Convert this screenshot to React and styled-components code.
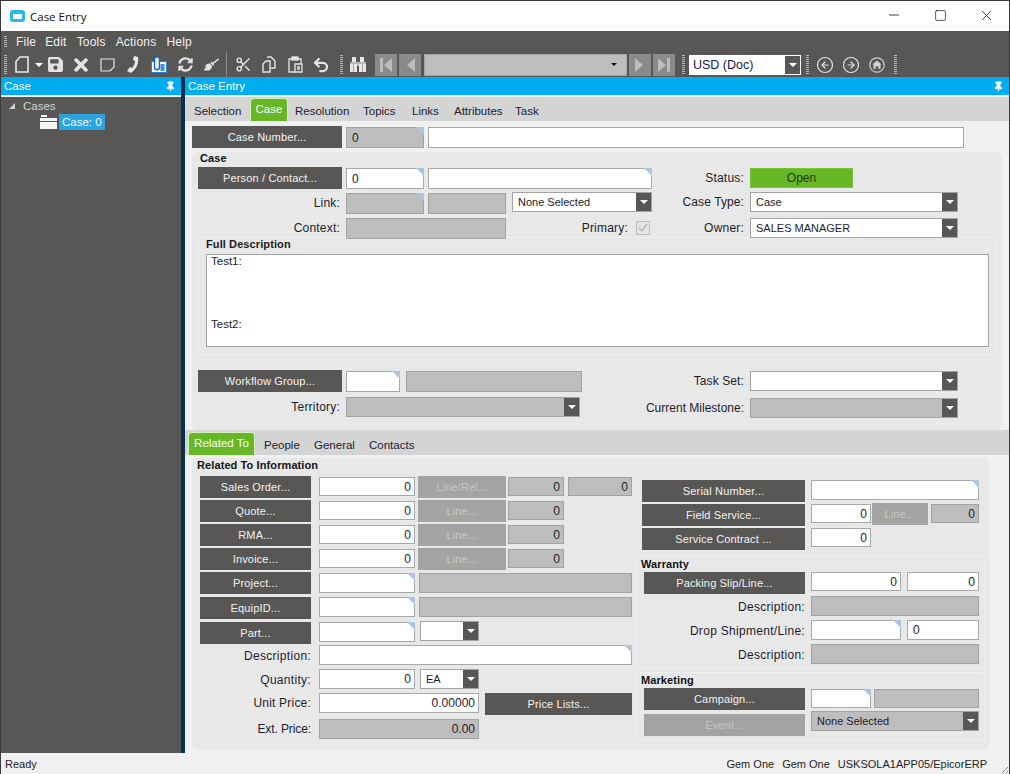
import React from 'react'
import styled, { createGlobalStyle } from 'styled-components'
import { FaSave, FaTimes, FaSyncAlt, FaBroom } from 'react-icons/fa'
import { Scissors, Undo2, CircleArrowLeft, CircleArrowRight, Pin, Minus, Square, X } from 'lucide-react'

const GlobalStyle = createGlobalStyle`
  * { box-sizing: border-box; }
  html, body { margin: 0; padding: 0; background: #fff; }
  body { font-family: "Liberation Sans", Arial, sans-serif; font-size: 12px; color: #1c1c1c; }
`

const Window = styled.div`
  width: 1010px;
  height: 774px;
  display: flex;
  flex-direction: column;
  border: 1px solid #3a3a3a;
  border-bottom: 0;
  overflow: hidden;
`

// title bar
const TitleBar = styled.div`
  height: 30px;
  flex: none;
  background: #fff;
  display: flex;
  align-items: center;
  padding-left: 9px;
`
const AppIcon = styled.div`
  width: 15px;
  height: 12px;
  border-radius: 3px;
  background: #29b6e8;
  display: flex;
  align-items: center;
  justify-content: center;
  margin-right: 5px;
  &::after {
    content: '';
    width: 9px;
    height: 5px;
    border-radius: 1px;
    background: #fff;
  }
`
const TitleText = styled.span`
  font-family: "Open Sans", sans-serif;
  font-size: 11.5px;
  flex: 1;
  color: #111;
`
const WinBtn = styled.div`
  width: 46px;
  height: 28px;
  margin-bottom: 2px;
  display: flex;
  align-items: center;
  justify-content: center;
  color: #111;
`

// menu and toolbar
const MenuBar = styled.div`
  height: 21px;
  flex: none;
  background: #595755;
  display: flex;
  align-items: center;
  padding-left: 3px;
`
const Grip = styled.div`
  width: 3px;
  height: ${p => p.$h || 20}px;
  flex: none;
  background: repeating-linear-gradient(to bottom, #b9b7b5 0 1px, transparent 1px 2px);
`
const MenuItem = styled.span`
  color: #f0f0f0;
  font-size: 12px;
  letter-spacing: 0.2px;
  margin-left: ${p => p.$ml}px;
`
const Toolbar = styled.div`
  height: 25px;
  flex: none;
  background: #595755;
  display: flex;
  align-items: center;
  padding-left: 3px;
`
const ToolSlot = styled.div`
  width: ${p => (p.$w === undefined ? 26 : p.$w)}px;
  height: 22px;
  flex: none;
  display: flex;
  align-items: center;
  justify-content: center;
  color: #e4e4e4;
  margin-left: ${p => p.$ml || 0}px;
`
const ToolSep = styled.div`
  width: 1px;
  height: 25px;
  background: #8d8b89;
  margin: 0 3px 0 2px;
  flex: none;
`
const NavBtn = styled.div`
  width: 22px;
  height: 22px;
  flex: none;
  background: #8a8a8a;
  display: flex;
  align-items: center;
  justify-content: center;
  margin-left: ${p => p.$ml || 2}px;
`
const NavCombo = styled.div`
  width: 203px;
  height: 22px;
  flex: none;
  margin-left: 3px;
  background: #bdbdbd;
  border: 1px solid #a5a5a5;
  display: flex;
  align-items: center;
  justify-content: flex-end;
  padding-right: 9px;
  &::after {
    content: '';
    border: 3px solid transparent;
    border-top: 3px solid #111;
    border-bottom: 0;
    width: 0;
    height: 0;
  }
`
const CurrencySelect = styled.div`
  width: 112px;
  height: 20px;
  flex: none;
  margin-left: 4px;
  background: #fff;
  border: 1px solid #fff;
  display: flex;
  align-items: center;
  font-size: 12.5px;
  color: #202040;
  padding-left: 3px;
`
const CurrencyText = styled.span`
  flex: 1;
`
const CaretBox = styled.div`
  width: ${p => p.$w || 15}px;
  align-self: stretch;
  flex: none;
  background: #595755;
  display: flex;
  align-items: center;
  justify-content: center;
  &::after {
    content: '';
    border: 4px solid transparent;
    border-top: 4px solid #fff;
    border-bottom: 0;
    width: 0;
    height: 0;
  }
`

// workspace
const Workspace = styled.div`
  flex: 1;
  display: flex;
  min-height: 0;
`
const SidePanel = styled.div`
  width: 180px;
  flex: none;
  background: #595755;
  display: flex;
  flex-direction: column;
`
const Splitter = styled.div`
  width: 4px;
  flex: none;
  background: #0b2f49;
`
const BlueHead = styled.div`
  height: 18px;
  flex: none;
  background: #00adef;
  color: #fff;
  font-size: 11.5px;
  display: flex;
  align-items: center;
  justify-content: space-between;
  padding: 0 5px 0 3px;
`
const WhiteLine = styled.div`
  height: 2px;
  flex: none;
  background: #f4f4f4;
`
const TreeRow = styled.div`
  display: flex;
  align-items: center;
  height: ${p => p.$h}px;
  color: #d4d4d4;
  font-size: 11.5px;
  padding-left: ${p => p.$pl}px;
`
const TreeCaret = styled.div`
  width: 0;
  height: 0;
  border-left: 6px solid transparent;
  border-bottom: 6px solid #cfcfcf;
  margin-right: 8px;
`
const TreeSel = styled.span`
  background: #2aa5e0;
  color: #f4f4f4;
  height: 16px;
  line-height: 16px;
  padding: 0 3px;
  margin-left: 2px;
`
const Main = styled.div`
  flex: 1;
  min-width: 0;
  display: flex;
  flex-direction: column;
`
const TabBar = styled.div`
  height: ${p => p.$h}px;
  flex: none;
  background: #d4d4d4;
  display: flex;
  align-items: flex-end;
  padding-left: ${p => p.$pl}px;
`
const Tab = styled.div`
  width: ${p => p.$w}px;
  height: 20px;
  flex: none;
  line-height: 20px;
  font-size: 11.5px;
  color: #222233;
`
const ActiveTab = styled.div`
  width: ${p => p.$w}px;
  height: ${p => p.$h}px;
  flex: none;
  margin: 0 ${p => p.$mr}px 0 ${p => p.$ml || 0}px;
  background: #68b727;
  color: #fff;
  border: 1px solid #d6f0c0;
  border-bottom: 0;
  border-radius: 4px 4px 0 0;
  text-align: center;
  font-size: 11.5px;
  line-height: 20px;
`
const Pane = styled.div`
  background: #f0f0f0;
  height: ${p => p.$h}px;
  flex: none;
  padding-top: ${p => p.$pt}px;
`
const Group = styled.div`
  margin-left: 7px;
  width: ${p => p.$w}px;
  height: ${p => p.$h}px;
  background: #e8e8e8;
  border-radius: 6px;
`
const GroupTitle = styled.div`
  font-weight: bold;
  font-size: 11px;
  letter-spacing: 0.1px;
  color: #111;
  height: ${p => p.$h}px;
  line-height: ${p => p.$lh || 13}px;
  padding-left: ${p => p.$pl}px;
`
const Row = styled.div`
  display: flex;
  align-items: flex-start;
  height: ${p => p.$h || 24}px;
  padding-left: ${p => p.$pl || 0}px;
  position: relative;
  z-index: 1;
`
const Columns = styled.div`
  display: flex;
  height: ${p => p.$h}px;
`
const Col = styled.div`
  width: ${p => p.$w}px;
  flex: none;
`
const Button = styled.div`
  width: ${p => p.$w}px;
  height: 22px;
  flex: none;
  margin-left: ${p => p.$ml || 0}px;
  margin-top: ${p => p.$mt || 0}px;
  background: ${p => (p.$off ? '#a3a3a3' : '#595755')};
  color: ${p => (p.$off ? '#c6c6c6' : '#f2f2f2')};
  display: flex;
  align-items: center;
  justify-content: center;
  font-size: 11px;
  letter-spacing: 0.15px;
`
const Field = styled.div`
  position: relative;
  width: ${p => p.$w}px;
  height: ${p => p.$h || 21}px;
  flex: none;
  margin-left: ${p => p.$ml || 0}px;
  margin-top: ${p => p.$mt || 0}px;
  background: ${p => (p.$off ? '#bdbdbd' : '#fff')};
  border: 1px solid ${p => (p.$off ? '#a2a2a2' : '#a8a8a8')};
  display: flex;
  align-items: center;
  justify-content: ${p => (p.$right ? 'flex-end' : 'flex-start')};
  padding: 0 3px 0 5px;
  color: #1c1c2c;
  ${p =>
    p.$corner &&
    `&::after {
      content: '';
      position: absolute;
      top: -1px;
      right: -1px;
      border-top: 8px solid #b0c4de;
      border-left: 8px solid transparent;
    }`}
`
const Select = styled.div`
  width: ${p => p.$w}px;
  height: 20px;
  flex: none;
  margin-left: ${p => p.$ml || 0}px;
  margin-top: ${p => p.$mt || 0}px;
  background: ${p => (p.$off ? '#bdbdbd' : '#fff')};
  border: 1px solid #a2a2a2;
  display: flex;
  align-items: center;
  padding-left: 5px;
  font-size: 11px;
  color: #1c1c2c;
`
const SelectText = styled.span`
  flex: 1;
  white-space: nowrap;
`
const Label = styled.div`
  width: ${p => p.$w}px;
  height: 20px;
  flex: none;
  display: flex;
  justify-content: flex-end;
  white-space: nowrap;
  line-height: 20px;
  margin-top: ${p => p.$mt || 0}px;
  margin-right: ${p => p.$mr || 6}px;
  font-size: 12px;
  letter-spacing: ${p => (p.$ls === undefined ? 0.2 : p.$ls)}px;
  color: #1c1c2c;
`
const StatusPill = styled.div`
  width: 103px;
  height: 20px;
  margin-top: 1px;
  background: #68b727;
  border: 1px solid #79c23b;
  text-align: center;
  line-height: 18px;
  color: #1d3a08;
`
const CheckBox = styled.div`
  width: 14px;
  height: 14px;
  margin-top: 3px;
  border: 1px solid #bdbdbd;
  background: #e4e4e4;
  color: #b5b5b5;
  display: flex;
  align-items: center;
  justify-content: center;
`
const DescGroup = styled.div`
  margin-left: 6px;
  width: 799px;
  height: 118px;
  border: 1px solid #f1f1f1;
  border-radius: 4px;
`
const DescTitle = styled.div`
  font-weight: bold;
  font-size: 11px;
  letter-spacing: 0.1px;
  height: 16px;
  line-height: 12px;
  padding-left: 7px;
`
const TextBox = styled.div`
  margin-left: 7px;
  width: 783px;
  height: 93px;
  background: #fff;
  border: 1px solid #a2a2a2;
  padding: 0 4px;
  font-size: 11.5px;
`
const TextLine = styled.div`
  height: 14px;
  line-height: 14px;
  margin-top: ${p => p.$mt}px;
`
const SubGroup = styled.div`
  height: ${p => p.$h}px;
  margin-top: ${p => p.$mt}px;
  width: 349px;
  border: 1px solid #f1f1f1;
  border-radius: 4px;
`
const StatusBar = styled.div`
  height: 21px;
  flex: none;
  background: #f0f0f0;
  display: flex;
  align-items: center;
  padding: 0 22px 0 4px;
  font-size: 11px;
  color: #222;
  position: relative;
`
const StatusText = styled.span`
  margin-left: ${p => p.$ml || 0}px;
`
const Spacer = styled.div`
  flex: 1;
`
const ResizeGrip = styled.div`
  position: absolute;
  right: 1px;
  bottom: 1px;
  width: 9px;
  height: 9px;
  background: repeating-linear-gradient(135deg, transparent 0 2px, #8a8a8a 2px 3px);
  clip-path: polygon(100% 0, 100% 100%, 0 100%);
`

const NewIcon = () => (
  <svg width="14" height="17" viewBox="0 0 14 17" fill="none" stroke="#e8e8e8" strokeWidth="1.6">
    <path d="M5 1h8v15H1V5.5z" />
  </svg>
)
const NoteIcon = () => (
  <svg width="15" height="14" viewBox="0 0 15 14" fill="none" stroke="#e4e4e4" strokeWidth="1.2">
    <path d="M1 1h13v8l-4 4H1z" />
  </svg>
)
const PhoneIcon = () => (
  <svg width="12" height="17" viewBox="0 0 12 17" fill="#e8e8e8">
    <path d="M7 0l4 1c1 5-1 12-7 16l-4-2 3-4 2 1c2-2 3-5 3-7L6 4z" />
  </svg>
)
const ClipIcon = () => (
  <svg width="16" height="17" viewBox="0 0 16 17" fill="none">
    <rect x="0.5" y="5.5" width="15" height="11" fill="#fff" stroke="#2f7fd6" />
    <rect x="3.500" y="0.800" width="5" height="13" rx="2.5" fill="#e8f0fa" stroke="#1d5fc0" strokeWidth="1.4" />
    <rect x="9.500" y="8" width="4" height="7" fill="#3d8fe0" />
  </svg>
)
const CopyIcon = () => (
  <svg width="14" height="17" viewBox="0 0 14 17" fill="none" stroke="#e4e4e4" strokeWidth="1.4">
    <path d="M5 1h4l4 4v7H9" />
    <path d="M4 5h4v11H1V8z" />
  </svg>
)
const PasteIcon = () => (
  <svg width="15" height="17" viewBox="0 0 15 17" fill="none" stroke="#e4e4e4" strokeWidth="1.3">
    <path d="M4 3H1v13h6" />
    <path d="M10 3h3v5" />
    <rect x="4" y="1" width="6" height="3" fill="#e4e4e4" />
    <path d="M7 8h7v8H7z" fill="#595755" />
    <path d="M9 11h3M9 13h3" />
  </svg>
)
const BinocularsIcon = () => (
  <svg width="16" height="15" viewBox="0 0 16 15">
    <path d="M2 0h4v5h1v10H0V5h2zM10 0h4v5h2v10H9V5h1z" fill="#e8e8e8" />
    <path d="M7 5h2v4H7z" fill="#bdbdbd" />
    <path d="M0 6h7M9 6h7" stroke="#8a8886" strokeWidth="1" />
    <path d="M3.500 7v8M12.500 7v8" stroke="#a8a6a4" strokeWidth="1" />
  </svg>
)
const HomeCircleIcon = () => (
  <svg width="16" height="16" viewBox="0 0 16 16">
    <circle cx="8" cy="8" r="7.2" fill="none" stroke="#d2d2d2" strokeWidth="1.2" />
    <path d="M8 3.5l4.5 4H11.5V12H9.5V9.5h-3V12H4.500V7.500H3.500z" fill="#d2d2d2" />
  </svg>
)
const NavIcon = ({ dir, bar }) => (
  <svg width="12" height="14" viewBox="0 0 12 14" fill="#bcbcbc">
    {dir === 'left' ? <path d={bar ? 'M12 0v14L4 7z' : 'M11 0v14L3 7z'} /> : <path d={bar ? 'M0 0v14l8-7z' : 'M1 0v14l8-7z'} />}
    {bar && <rect x={dir === 'left' ? 0 : 9} y="0" width="3" height="14" />}
  </svg>
)
const FolderIcon = () => (
  <svg width="17" height="14" viewBox="0 0 17 14" fill="#f4f4f4">
    <path d="M1 0h6v2H1zM0 3h17v3H0zM0 7h17v7H0z" />
  </svg>
)
const CheckMark = () => (
  <svg width="12" height="12" viewBox="0 0 12 12" fill="none" stroke="currentColor" strokeWidth="1.4">
    <path d="M2 6l3 3 5-7" />
  </svg>
)

const lineRows = [
  { name: 'Quote...', },
  { name: 'RMA...', },
  { name: 'Invoice...', },
]

const App = () => {
  return (
    <>
      <GlobalStyle />
      <Window>
        <TitleBar>
          <AppIcon />
          <TitleText>Case Entry</TitleText>
          <WinBtn><Minus size={16} strokeWidth={1.2} /></WinBtn>
          <WinBtn><Square size={13} strokeWidth={1.3} /></WinBtn>
          <WinBtn><X size={17} strokeWidth={1.1} /></WinBtn>
        </TitleBar>

        <MenuBar>
          <Grip $h={11} />
          <MenuItem $ml={9}>File</MenuItem>
          <MenuItem $ml={9}>Edit</MenuItem>
          <MenuItem $ml={10}>Tools</MenuItem>
          <MenuItem $ml={10}>Actions</MenuItem>
          <MenuItem $ml={10}>Help</MenuItem>
        </MenuBar>

        <Toolbar>
          <Grip />
          <ToolSlot $ml={2}><NewIcon /></ToolSlot>
          <ToolSlot $w={7}><CaretBox $w={7} /></ToolSlot>
          <ToolSlot><FaSave size={17} /></ToolSlot>
          <ToolSlot><FaTimes size={20} /></ToolSlot>
          <ToolSlot><NoteIcon /></ToolSlot>
          <ToolSlot><PhoneIcon /></ToolSlot>
          <ToolSlot><ClipIcon /></ToolSlot>
          <ToolSlot><FaSyncAlt size={15} /></ToolSlot>
          <ToolSlot><FaBroom size={15} /></ToolSlot>
          <ToolSep />
          <ToolSlot><Scissors size={17} strokeWidth={2} /></ToolSlot>
          <ToolSlot><CopyIcon /></ToolSlot>
          <ToolSlot><PasteIcon /></ToolSlot>
          <ToolSlot><Undo2 size={18} strokeWidth={3} /></ToolSlot>
          <ToolSlot $w={6} />
          <Grip />
          <ToolSlot $ml={2}><BinocularsIcon /></ToolSlot>
          <NavBtn $ml={4}><NavIcon dir="left" bar /></NavBtn>
          <NavBtn><NavIcon dir="left" /></NavBtn>
          <NavCombo />
          <NavBtn $ml={2}><NavIcon dir="right" /></NavBtn>
          <NavBtn><NavIcon dir="right" bar /></NavBtn>
          <ToolSlot $w={7} />
          <Grip />
          <CurrencySelect>
            <CurrencyText>USD (Doc)</CurrencyText>
            <CaretBox />
          </CurrencySelect>
          <ToolSlot $w={5} />
          <Grip />
          <ToolSlot $ml={3}><CircleArrowLeft size={18} strokeWidth={1.6} /></ToolSlot>
          <ToolSlot><CircleArrowRight size={18} strokeWidth={1.6} /></ToolSlot>
          <ToolSlot><HomeCircleIcon /></ToolSlot>
          <ToolSlot $w={4} />
          <Grip />
        </Toolbar>

        <Workspace>
          <SidePanel>
            <BlueHead>Case<Pin size={11} fill="#fff" /></BlueHead>
            <WhiteLine />
            <TreeRow $h={17} $pl={8}>
              <TreeCaret />Cases
            </TreeRow>
            <TreeRow $h={16} $pl={39}>
              <FolderIcon />
              <TreeSel>Case: 0</TreeSel>
            </TreeRow>
          </SidePanel>
          <Splitter />

          <Main>
            <BlueHead>Case Entry<Pin size={11} fill="#fff" /></BlueHead>
            <WhiteLine />
            <TabBar $h={24} $pl={9}>
              <Tab $w={56}>Selection</Tab>
              <ActiveTab $w={38} $h={23} $mr={7}>Case</ActiveTab>
              <Tab $w={68}>Resolution</Tab>
              <Tab $w={49}>Topics</Tab>
              <Tab $w={42}>Links</Tab>
              <Tab $w={61}>Attributes</Tab>
              <Tab $w={40}>Task</Tab>
            </TabBar>

            <Pane $h={309} $pt={5}>
              <Row $h={26} $pl={7}>
                <Button $w={150}>Case Number...</Button>
                <Field $w={78} $ml={4} $mt={1} $off $corner>0</Field>
                <Field $w={536} $ml={4} $mt={1} />
              </Row>

              <Group $w={810} $h={278}>
                <GroupTitle $h={15} $pl={8}>Case</GroupTitle>
                <Columns $h={70}>
                  <Col $w={460}>
                    <Row $h={25} $pl={6}>
                      <Button $w={144}>Person / Contact...</Button>
                      <Field $w={78} $ml={4} $mt={1} $corner>0</Field>
                      <Field $w={224} $ml={4} $mt={1} $corner />
                    </Row>
                    <Row $h={26} $pl={6}>
                      <Label $w={142} $mt={1}>Link:</Label>
                      <Field $w={78} $mt={1} $off $corner />
                      <Field $w={78} $ml={4} $mt={1} $off />
                      <Select $w={140} $ml={6}>
                        <SelectText>None Selected</SelectText>
                        <CaretBox />
                      </Select>
                    </Row>
                    <Row $h={19} $pl={6}>
                      <Label $w={142}>Context:</Label>
                      <Field $w={160} $off />
                      <Label $w={122} $mr={8}>Primary:</Label>
                      <CheckBox><CheckMark /></CheckBox>
                    </Row>
                  </Col>
                  <Col $w={320}>
                    <Row $h={25}>
                      <Label $w={92} $mt={1}>Status:</Label>
                      <StatusPill>Open</StatusPill>
                    </Row>
                    <Row $h={26}>
                      <Label $w={92} $ls={0.1}>Case Type:</Label>
                      <Select $w={208}>
                        <SelectText>Case</SelectText>
                        <CaretBox />
                      </Select>
                    </Row>
                    <Row $h={19}>
                      <Label $w={92}>Owner:</Label>
                      <Select $w={208}>
                        <SelectText>SALES MANAGER</SelectText>
                        <CaretBox />
                      </Select>
                    </Row>
                  </Col>
                </Columns>

                <DescGroup>
                  <DescTitle>Full Description</DescTitle>
                  <TextBox>
                    <TextLine $mt={-1}>Test1:</TextLine>
                    <TextLine $mt={49}>Test2:</TextLine>
                  </TextBox>
                </DescGroup>

                <Columns $h={60}>
                  <Col $w={460}>
                    <Row $h={27} $pl={6}>
                      <Button $w={144} $mt={15}>Workflow Group...</Button>
                      <Field $w={54} $ml={4} $mt={16} $corner />
                      <Field $w={176} $ml={6} $mt={16} $off />
                    </Row>
                    <Row $h={20} $pl={6}>
                      <Label $w={142} $mt={15}>Territory:</Label>
                      <Select $w={234} $mt={15} $off>
                        <SelectText />
                        <CaretBox />
                      </Select>
                    </Row>
                  </Col>
                  <Col $w={320}>
                    <Row $h={27}>
                      <Label $w={92} $mt={16} $ls={0.1}>Task Set:</Label>
                      <Select $w={208} $mt={16}>
                        <SelectText />
                        <CaretBox />
                      </Select>
                    </Row>
                    <Row $h={20}>
                      <Label $w={92} $mt={16} $ls={0}>Current Milestone:</Label>
                      <Select $w={208} $mt={16} $off>
                        <SelectText />
                        <CaretBox />
                      </Select>
                    </Row>
                  </Col>
                </Columns>
              </Group>
            </Pane>

            <TabBar $h={25} $pl={3}>
              <ActiveTab $w={67} $h={23} $mr={9}>Related To</ActiveTab>
              <Tab $w={50}>People</Tab>
              <Tab $w={55}>General</Tab>
              <Tab $w={60}>Contacts</Tab>
            </TabBar>

            <Pane $h={298} $pt={3}>
              <Group $w={798} $h={292}>
                <GroupTitle $h={18} $lh={15} $pl={5}>Related To Information</GroupTitle>
                <Columns $h={274}>
                  <Col $w={444}>
                    <Row $pl={8}>
                      <Button $w={111}>Sales Order...</Button>
                      <Field $w={96} $h={19} $ml={8} $mt={1} $right>0</Field>
                      <Button $w={88} $ml={3} $off>Line/Rel...</Button>
                      <Field $w={56} $h={19} $ml={2} $mt={1} $off $right>0</Field>
                      <Field $w={64} $h={19} $ml={4} $mt={1} $off $right>0</Field>
                    </Row>
                    {lineRows.map(row => (
                      <Row key={row.name} $pl={8}>
                        <Button $w={111}>{row.name}</Button>
                        <Field $w={96} $h={19} $ml={8} $mt={1} $right>0</Field>
                        <Button $w={88} $ml={3} $off>Line...</Button>
                        <Field $w={56} $h={19} $ml={2} $mt={1} $off $right>0</Field>
                      </Row>
                    ))}
                    <Row $h={25} $pl={8}>
                      <Button $w={111}>Project...</Button>
                      <Field $w={96} $h={20} $ml={8} $mt={1} $corner />
                      <Field $w={213} $h={20} $ml={4} $mt={1} $off />
                    </Row>
                    <Row $h={25} $pl={8}>
                      <Button $w={111}>EquipID...</Button>
                      <Field $w={96} $h={20} $ml={8} $corner />
                      <Field $w={213} $h={20} $ml={4} $off />
                    </Row>
                    <Row $h={23} $pl={8}>
                      <Button $w={111}>Part...</Button>
                      <Field $w={96} $h={20} $ml={8} $corner />
                      <Select $w={59} $ml={5} $mt={-1}>
                        <SelectText />
                        <CaretBox />
                      </Select>
                    </Row>
                    <Row $pl={8}>
                      <Label $w={111} $mr={8} $mt={1} $ls={0.3}>Description:</Label>
                      <Field $w={313} $h={20} $corner />
                    </Row>
                    <Row $pl={8}>
                      <Label $w={111} $mr={8} $mt={1} $ls={0.3}>Quantity:</Label>
                      <Field $w={96} $h={20} $right>0</Field>
                      <Select $w={59} $ml={5}>
                        <SelectText>EA</SelectText>
                        <CaretBox />
                      </Select>
                    </Row>
                    <Row $h={26} $pl={8}>
                      <Label $w={111} $mr={8} $ls={0.2}>Unit Price:</Label>
                      <Field $w={160} $h={20} $right>0.00000</Field>
                      <Button $w={147} $ml={6}>Price Lists...</Button>
                    </Row>
                    <Row $pl={8}>
                      <Label $w={111} $mr={8} $ls={-0.1}>Ext. Price:</Label>
                      <Field $w={160} $h={20} $off $right>0.00</Field>
                    </Row>
                  </Col>

                  <Col $w={354}>
                    <Row $pl={6} $h={24}>
                      <Button $w={163} $mt={4}>Serial Number...</Button>
                      <Field $w={168} $h={20} $ml={6} $mt={4} $corner />
                    </Row>
                    <Row $pl={6} $h={24}>
                      <Button $w={163} $mt={4}>Field Service...</Button>
                      <Field $w={60} $h={19} $ml={6} $mt={4} $right>0</Field>
                      <Button $w={56} $ml={1} $mt={3} $off>Line...</Button>
                      <Field $w={48} $h={19} $ml={3} $mt={4} $off $right>0</Field>
                    </Row>
                    <Row $pl={6} $h={26}>
                      <Button $w={163} $mt={4}>Service Contract ...</Button>
                      <Field $w={60} $h={19} $ml={6} $mt={4} $right>0</Field>
                    </Row>

                    <SubGroup $h={113} $mt={6}>
                      <GroupTitle $h={15} $lh={15} $pl={4}>Warranty</GroupTitle>
                      <Row $pl={7}>
                        <Button $w={161}>Packing Slip/Line...</Button>
                        <Field $w={90} $h={19} $ml={6} $right>0</Field>
                        <Field $w={72} $h={19} $ml={6} $right>0</Field>
                      </Row>
                      <Row $pl={7}>
                        <Label $w={161} $mt={1} $ls={0.3}>Description:</Label>
                        <Field $w={168} $h={20} $off />
                      </Row>
                      <Row $pl={7}>
                        <Label $w={161} $mt={1} $ls={0.3}>Drop Shipment/Line:</Label>
                        <Field $w={90} $h={20} $corner />
                        <Field $w={72} $h={20} $ml={6}>0</Field>
                      </Row>
                      <Row $pl={7}>
                        <Label $w={161} $mt={1} $ls={0.3}>Description:</Label>
                        <Field $w={168} $h={20} $off />
                      </Row>
                    </SubGroup>

                    <SubGroup $h={69} $mt={3}>
                      <GroupTitle $h={15} $lh={15} $pl={4}>Marketing</GroupTitle>
                      <Columns $h={50}>
                        <Col $w={174}>
                          <Row $h={26} $pl={7}>
                            <Button $w={161}>Campaign...</Button>
                          </Row>
                          <Row $h={22} $pl={7}>
                            <Button $w={161} $off>Event...</Button>
                          </Row>
                        </Col>
                        <Col $w={170}>
                          <Row $h={23}>
                            <Field $w={60} $h={19} $mt={1} $corner />
                            <Field $w={105} $h={19} $ml={3} $mt={1} $off />
                          </Row>
                          <Row $h={20}>
                            <Select $w={168} $off>
                              <SelectText>None Selected</SelectText>
                              <CaretBox />
                            </Select>
                          </Row>
                        </Col>
                      </Columns>
                    </SubGroup>
                  </Col>
                </Columns>
              </Group>
            </Pane>
          </Main>
        </Workspace>

        <StatusBar>
          <StatusText>Ready</StatusText>
          <Spacer />
          <StatusText>Gem One</StatusText>
          <StatusText $ml={8}>Gem One</StatusText>
          <StatusText $ml={8}>USKSOLA1APP05/EpicorERP</StatusText>
          <ResizeGrip />
        </StatusBar>
      </Window>
    </>
  )
}

export default App
